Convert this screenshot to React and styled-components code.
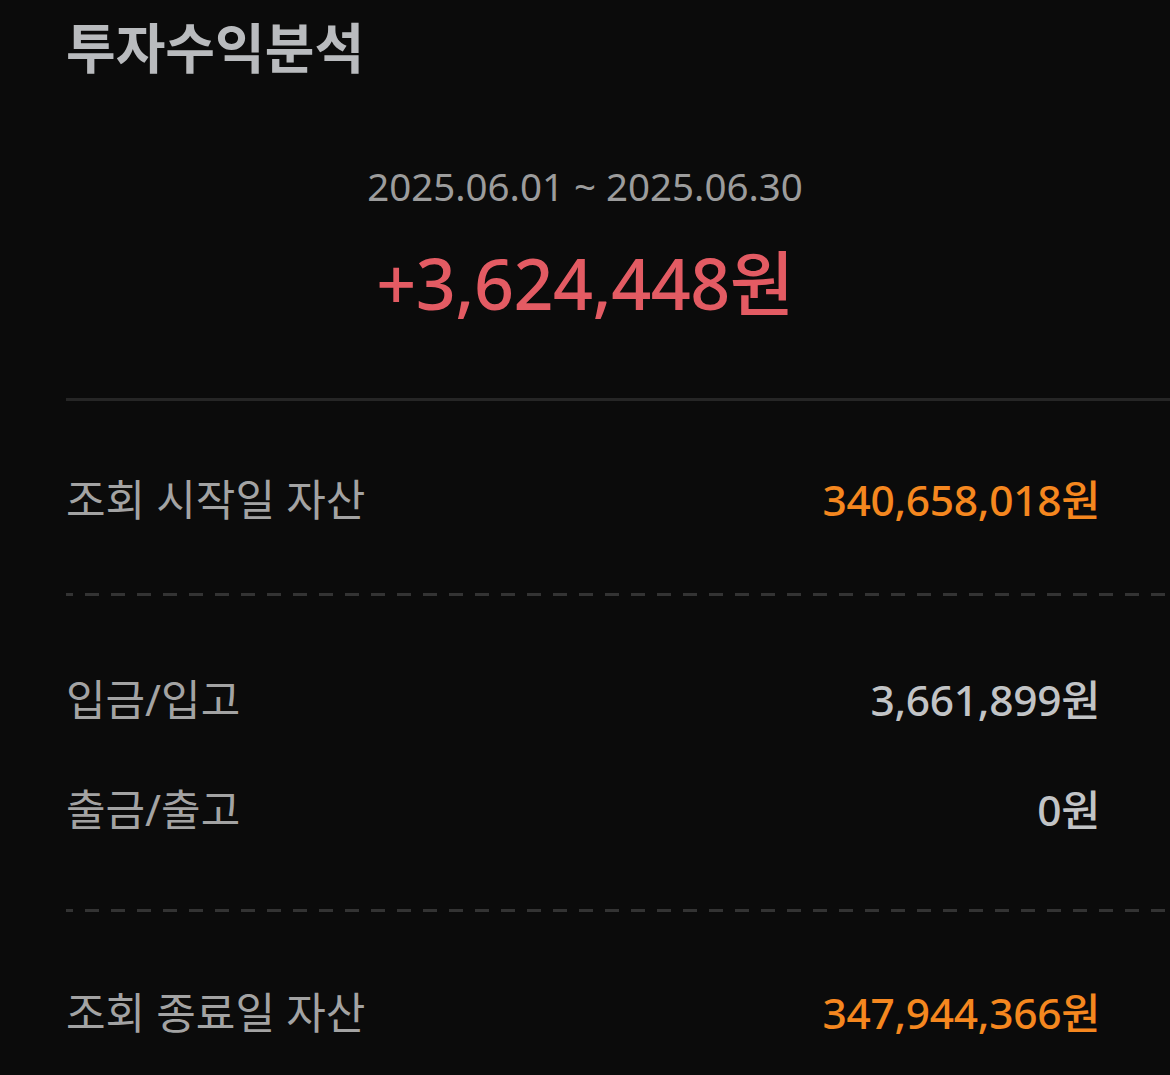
import React from 'react'
import styled, { createGlobalStyle } from 'styled-components'

const GlobalStyle = createGlobalStyle`
  html, body {
    margin: 0;
    padding: 0;
    background: #0b0b0b;
  }
  body {
    font-family: "Noto Sans", "Noto Sans CJK KR", sans-serif;
  }
`

const Page = styled.div`
  min-height: 1075px;
  background: #0b0b0b;
  padding: 0 66px;
  overflow: hidden;
`

const Title = styled.h1`
  margin: 0;
  padding-top: 12px;
  font-size: 54px;
  font-weight: 700;
  line-height: 72px;
  color: #b9bbbe;
`

const Summary = styled.div`
  display: flex;
  flex-direction: column;
  align-items: center;
  padding-top: 78px;
  padding-bottom: 70px;
`

const Period = styled.div`
  font-size: 38.5px;
  line-height: 48px;
  color: #9c9c9c;
`

const Profit = styled.div`
  margin-top: 28px;
  font-size: 70px;
  font-weight: 500;
  line-height: 90px;
  color: #e35b63;
  letter-spacing: -0.5px;
`

const Divider = styled.hr`
  margin: 0 -66px 0 0;
  border: none;
  height: 3px;
  background: ${p => (p.$dashed ? 'none' : '#262626')};
  ${p =>
    p.$dashed &&
    `background-image: repeating-linear-gradient(to right, #333 0 7px, transparent 7px 19px, #333 19px 26px);`}
`

const Section = styled.div`
  display: flex;
  flex-direction: column;
  gap: ${p => p.$gap || 0}px;
  padding: ${p => p.$pad || '0'};
`

const Row = styled.div`
  display: flex;
  align-items: center;
  justify-content: space-between;
  height: 64px;
  padding-right: 4px;
`

const Label = styled.span`
  font-size: 43px;
  color: #a3a3a3;
`

const Value = styled.span`
  font-size: 42.5px;
  font-weight: 500;
  letter-spacing: -0.3px;
  color: ${p => (p.$accent ? '#f5871f' : '#c2c4c6')};
`

const App = () => {
  return (
    <Page>
      <GlobalStyle />
      <Title>투자수익분석</Title>
      <Summary>
        <Period>2025.06.01 ~ 2025.06.30</Period>
        <Profit>+3,624,448원</Profit>
      </Summary>
      <Divider />
      <Section $pad="64px 0 64px">
        <Row>
          <Label>조회 시작일 자산</Label>
          <Value $accent>340,658,018원</Value>
        </Row>
      </Section>
      <Divider $dashed />
      <Section $gap={46} $pad="69px 0 70px">
        <Row>
          <Label>입금/입고</Label>
          <Value>3,661,899원</Value>
        </Row>
        <Row>
          <Label>출금/출고</Label>
          <Value>0원</Value>
        </Row>
      </Section>
      <Divider $dashed />
      <Section $pad="66px 0 0">
        <Row>
          <Label>조회 종료일 자산</Label>
          <Value $accent>347,944,366원</Value>
        </Row>
      </Section>
    </Page>
  )
}

export default App
